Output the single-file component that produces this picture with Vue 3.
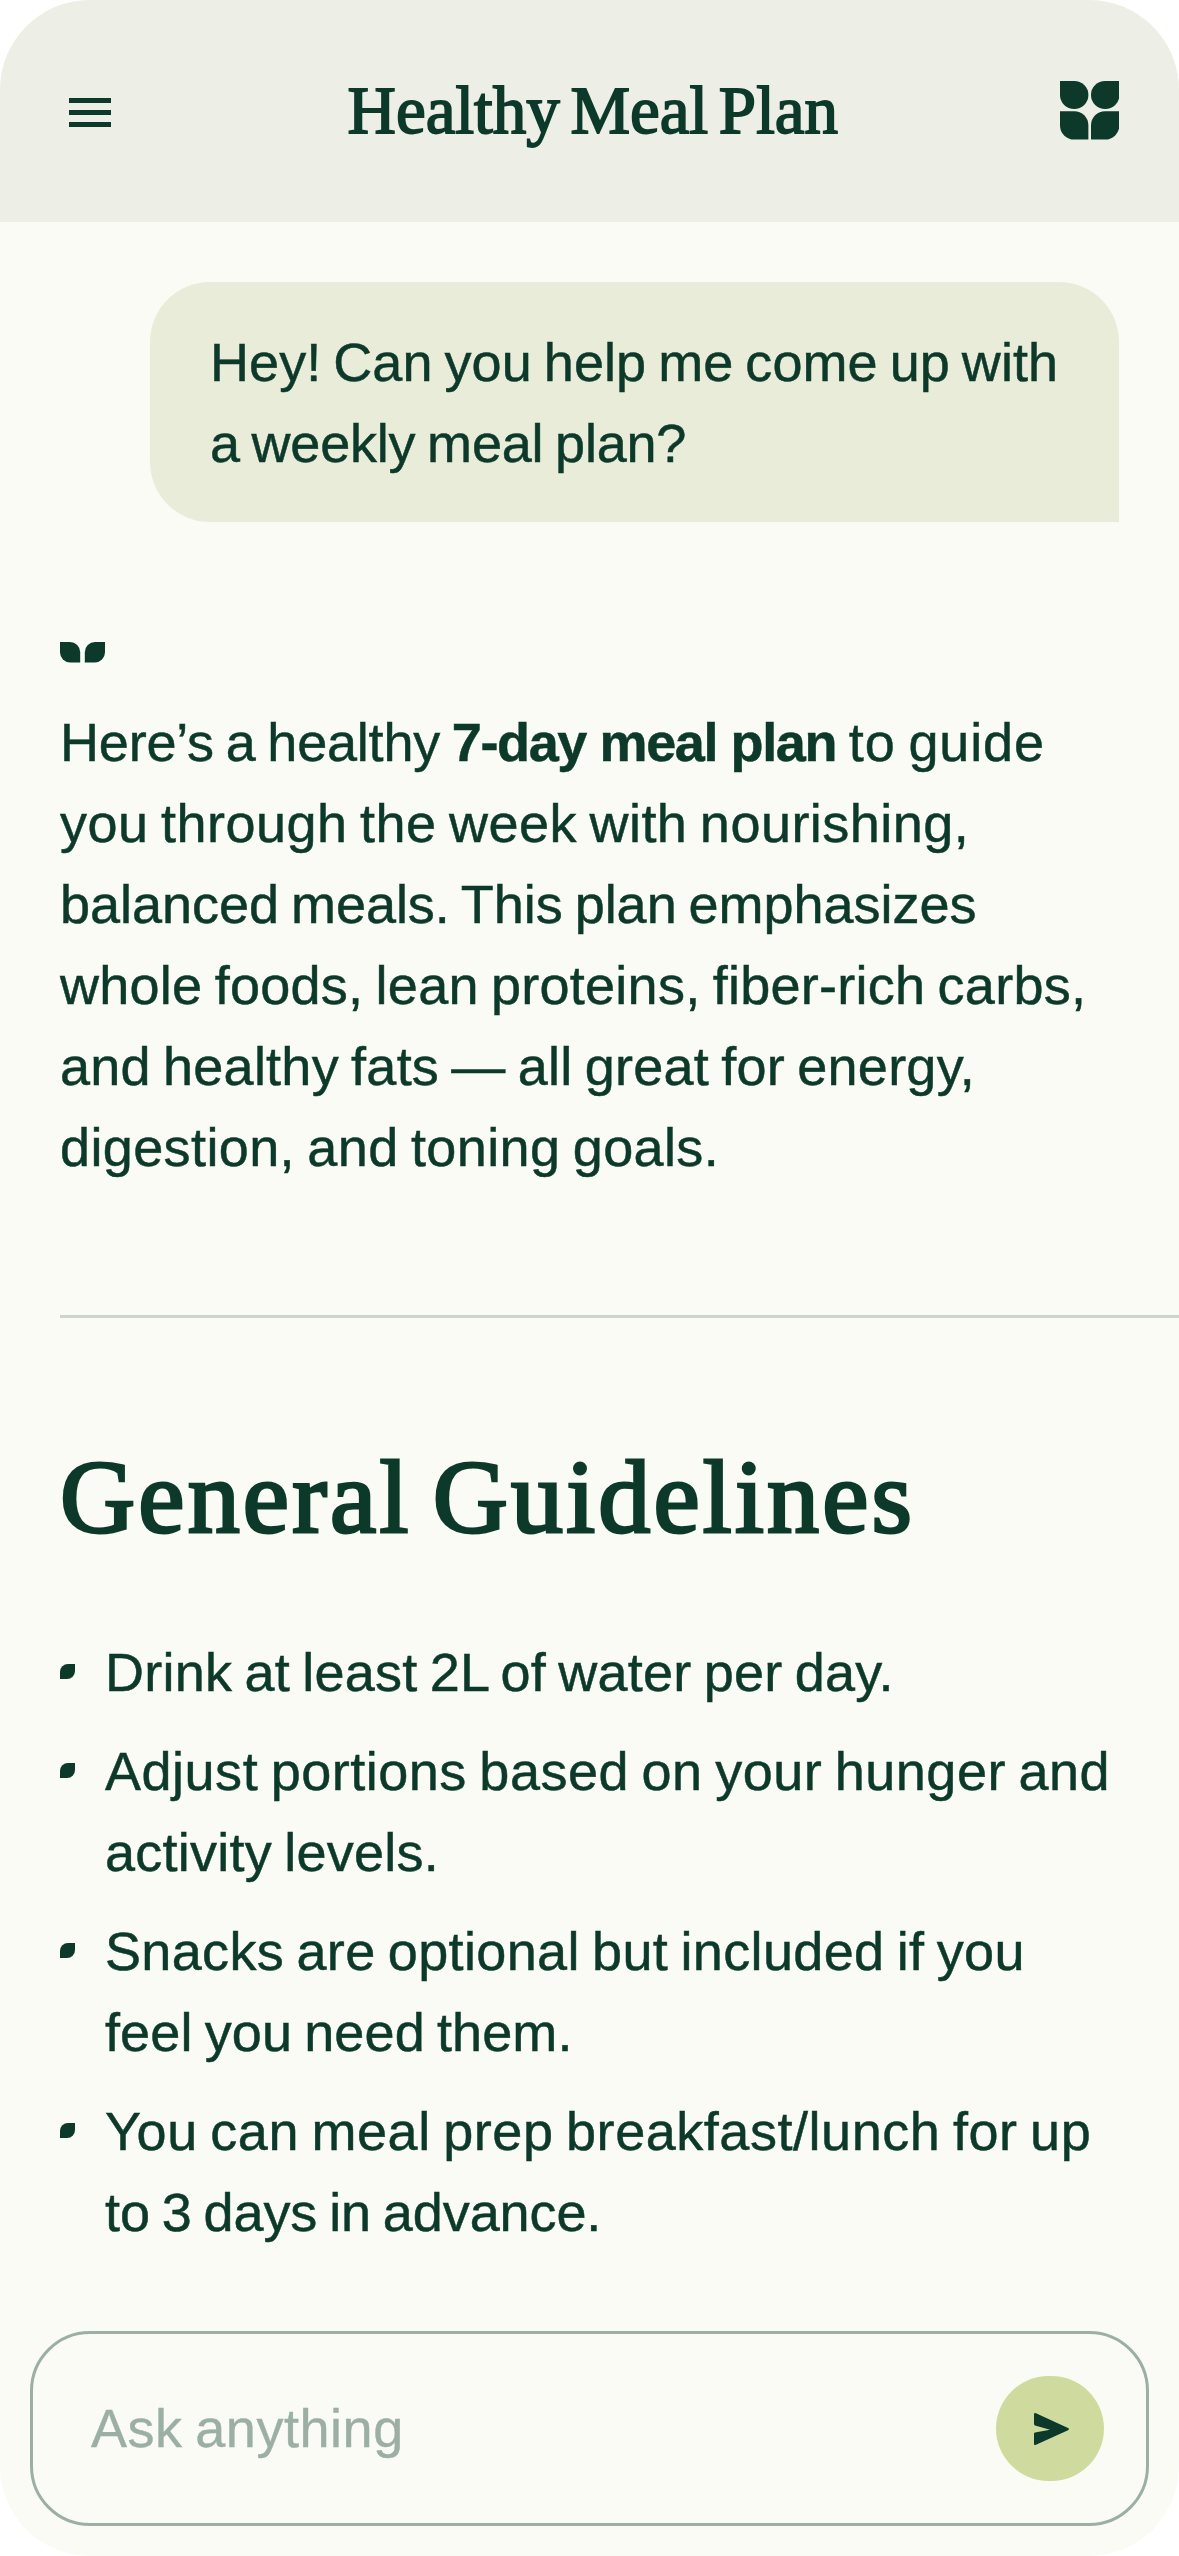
<template>
  <div class="screen">
    <header class="topbar">
      <button class="menu" aria-label="Menu">
        <span></span><span></span><span></span>
      </button>
      <h1 class="title">Healthy Meal Plan</h1>
      <svg class="logo" viewBox="0 0 59.4 58.6" aria-hidden="true">
        <path d="M0 0H14.2A14.2 14 0 0 1 14.2 28A14.2 14 0 0 1 0 14Z" />
        <path d="M59.4 0H45.2A14.2 14 0 0 0 45.2 28A14.2 14 0 0 0 59.4 14Z" />
        <path d="M0 30.2H14.2A14.2 14.2 0 0 1 28.4 44.4V58.6H14.2A14.2 14.2 0 0 1 0 44.4Z" />
        <path d="M59.4 30.2H45.2A14.2 14.2 0 0 0 31 44.4V58.6H45.2A14.2 14.2 0 0 0 59.4 44.4Z" />
      </svg>
    </header>

    <main class="chat">
      <div class="bubble">
        <div v-for="(line, i) in question" :key="i" class="line" :style="track(line)">{{ line.text }}</div>
      </div>

      <section class="answer">
        <svg class="sprout" viewBox="0 0 45 21" aria-hidden="true">
          <path d="M0 0H10A10.2 10.2 0 0 1 20.2 10.2V20.5H10.2A10.2 10.2 0 0 1 0 10.3Z" />
          <path d="M45 0H35A10.2 10.2 0 0 0 24.8 10.2V20.5H34.8A10.2 10.2 0 0 0 45 10.3Z" />
        </svg>
        <p class="intro">
          <span class="line lead">Here’s a healthy <strong>7-day meal plan</strong><span class="tail"> to guide</span></span>
          <span v-for="(line, i) in intro" :key="i" class="line" :style="track(line)">{{ line.text }}</span>
        </p>
      </section>

      <hr class="rule" />

      <h2 class="heading">General Guidelines</h2>
      <ul class="tips">
        <li v-for="(tip, i) in tips" :key="i">
          <span class="leaf"></span>
          <div>
            <div v-for="(line, j) in tip" :key="j" class="line" :style="track(line)">{{ line.text }}</div>
          </div>
        </li>
      </ul>
    </main>

    <form class="composer" @submit.prevent>
      <input v-model="draft" type="text" placeholder="Ask anything" />
      <button class="send" aria-label="Send">
        <svg viewBox="0 0 35 32" aria-hidden="true">
          <path d="M0 1.5Q0 -.5 2 .3L34 15Q36 16 34 17.2L2 31.8Q0 32.6 0 30.7V20.6Q0 19.6 1 19.4L16 16.7L1 12.4Q0 12 0 11Z" />
        </svg>
      </button>
    </form>
  </div>
</template>

<script setup>
import { ref } from 'vue'

const draft = ref('')

// ls = letter spacing of the line, px
const question = [
  { text: 'Hey! Can you help me come up with', ls: 0.05 },
  { text: 'a weekly meal plan?', ls: -0.22 },
]

const intro = [
  { text: 'you through the week with nourishing,', ls: 0.48 },
  { text: 'balanced meals. This plan emphasizes', ls: -0.03 },
  { text: 'whole foods, lean proteins, fiber-rich carbs,', ls: 0.26 },
  { text: 'and healthy fats — all great for energy,', ls: 0.24 },
  { text: 'digestion, and toning goals.', ls: 0.38 },
]

const tips = [
  [{ text: 'Drink at least 2L of water per day.', ls: 0.24 }],
  [{ text: 'Adjust portions based on your hunger and', ls: 0.51 }, { text: 'activity levels.', ls: 0.25 }],
  [{ text: 'Snacks are optional but included if you', ls: 0.34 }, { text: 'feel you need them.', ls: 0.12 }],
  [{ text: 'You can meal prep breakfast/lunch for up', ls: 0.54 }, { text: 'to 3 days in advance.', ls: -0.1 }],
]

function track(line) {
  return { letterSpacing: `${line.ls}px` }
}
</script>

<style>
body { margin: 0; background: #fff; }
</style>

<style scoped>
.screen {
  width: 1179px; height: 2556px; box-sizing: border-box; overflow: hidden;
  display: flex; flex-direction: column;
  border-radius: 90px; background: #fafbf5; color: #0c3929;
  font: 54px/81px "Liberation Sans", Arial, sans-serif; word-spacing: -3px;
}
.topbar {
  height: 222px; flex: none; box-sizing: border-box; padding: 0 60px 1px 69px;
  display: flex; justify-content: space-between; align-items: center; background: #edeee6;
}
.menu {
  width: 57px; margin-top: 4px; padding: 0; border: 0; background: none;
  display: flex; flex-direction: column; gap: 7px;
}
.menu span { width: 42px; height: 5px; background: #0c3929; }
.title {
  margin: 0; padding-bottom: 2px; font: 400 67px/80px "Liberation Serif", Georgia, serif;
  letter-spacing: 0; word-spacing: -6px; -webkit-text-stroke: 1.8px #0c3929;
}
.logo { width: 59.4px; height: 58.6px; fill: #0c3929; }
.chat { flex: 1; padding: 60px 0 0 60px; }
.line { display: block; white-space: nowrap; -webkit-text-stroke: .5px #0c3929; }
.bubble {
  width: 969px; height: 240px; margin-left: 90px; padding: 40px 60px 38px; box-sizing: border-box;
  border-radius: 60px 60px 0 60px; background: #e9ecd9;
}
.answer { margin-top: 120px; }
.sprout { display: block; width: 45px; height: 21px; fill: #0c3929; }
.intro { margin: 39px 0 0; }
.lead { letter-spacing: -.2px; }
.lead strong { font-weight: 700; letter-spacing: -1.4px; word-spacing: 0; }
.tail { letter-spacing: .85px; }
.rule { margin: 127px 0 0; border: 0; height: 3px; background: #cdd6cd; }
.heading {
  margin: 119px 0 0; font: 400 104px/120px "Liberation Serif", Georgia, serif;
  letter-spacing: 3.2px; word-spacing: -8px; -webkit-text-stroke: 3px #0c3929;
}
.tips { margin: 75px 0 0; padding: 0; list-style: none; display: flex; flex-direction: column; gap: 18px; }
.tips li { display: flex; gap: 30px; }
.leaf { flex: none; width: 15px; height: 15px; margin-top: 32px; border-radius: 8px 0 8px 0; background: #0c3929; }
.composer {
  flex: none; height: 195px; margin: 0 30px 30px; padding: 0 42px 0 58px; box-sizing: border-box;
  display: flex; align-items: center; border: 3px solid #9cafa5; border-radius: 60px;
}
input {
  flex: 1; min-width: 0; padding: 0; border: 0; outline: 0; background: none;
  font: inherit; letter-spacing: .55px; word-spacing: inherit; color: #0c3929;
}
input::placeholder { color: #9cafa5; opacity: 1; -webkit-text-stroke: .4px #9cafa5; }
.send {
  width: 108px; height: 105px; padding: 0; border: 0; border-radius: 54px; background: #cfdb9e;
  display: flex; align-items: center; justify-content: center;
}
.send svg { width: 35px; height: 32px; margin-left: 3px; fill: #0c3929; }
</style>
